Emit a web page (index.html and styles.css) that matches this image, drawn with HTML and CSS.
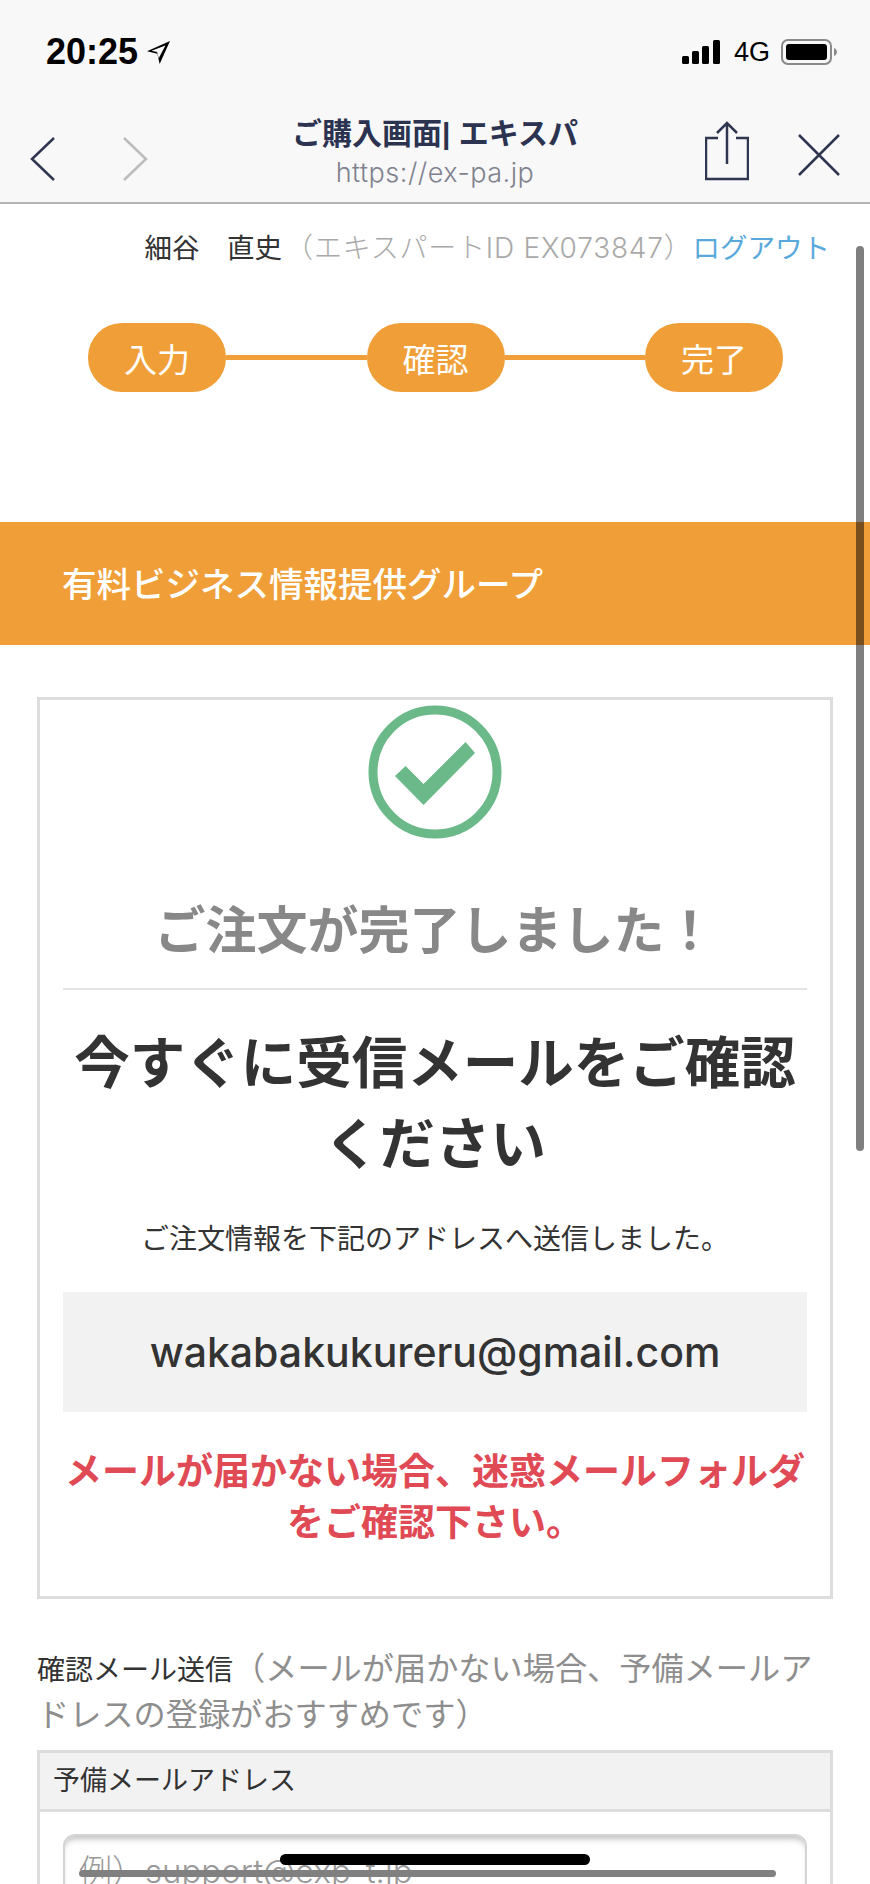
FILE: index.html
```html
<!DOCTYPE html>
<html lang="ja">
<head>
  <meta charset="UTF-8" />
  <meta name="viewport" content="width=device-width, initial-scale=1.0" />
  <title>ご購入画面| エキスパ</title>
  <link rel="stylesheet" href="styles.css">
</head>
<body>
  <div class="screen">
    <header class="browser-bar">
      <div class="status-bar">
        <div class="status-time">
          <span>20:25</span>
          <svg class="location-icon" viewBox="2 2 20 20" width="23" height="23">
            <path d="M22 2 L2 11 L11 13 L13 22 Z M18 6 L12.2 17 L10.8 11.500 L6 10.400 Z" fill="#000" fill-rule="evenodd"/>
          </svg>
        </div>
        <div class="status-right">
          <svg class="signal-icon" viewBox="0 0 38 24" width="38" height="24">
            <rect x="0" y="16" width="7" height="8" rx="1.5" fill="#000"/>
            <rect x="10" y="11" width="7" height="13" rx="1.5" fill="#000"/>
            <rect x="20" y="6" width="7" height="18" rx="1.5" fill="#000"/>
            <rect x="31" y="0" width="7" height="24" rx="1.5" fill="#000"/>
          </svg>
          <span class="network">4G</span>
          <svg viewBox="0 0 56 26" width="56" height="26">
            <rect x="1" y="1" width="49" height="24" rx="6" fill="none" stroke="#8a8a8a" stroke-width="2"/>
            <rect x="5" y="5" width="41" height="16" rx="3" fill="#000"/>
            <path d="M53 9 C55 10 56 11.500 56 13 C56 14.500 55 16 53 17 Z" fill="#8a8a8a"/>
          </svg>
        </div>
      </div>
      <nav class="nav-bar">
        <div class="nav-arrows">
          <svg viewBox="0 0 26 44" width="26" height="44">
            <path d="M24 1 L2 22 L24 43" fill="none" stroke="#2f3650" stroke-width="2.500"/>
          </svg>
          <svg viewBox="0 0 26 44" width="26" height="44">
            <path d="M2 1 L24 22 L2 43" fill="none" stroke="#bcbcbc" stroke-width="2.500"/>
          </svg>
        </div>
        <div class="nav-title">
          <div class="page-title">ご購入画面| エキスパ</div>
          <div class="page-url">https://ex-pa.jp</div>
        </div>
        <div class="nav-actions">
          <svg class="share-icon" viewBox="0 0 44 60" width="44" height="60">
            <path d="M13 17 H1 V58 H43 V17 H31 M22 43 V2 M12 12 L22 2 L32 12" fill="none" stroke="#2f3650" stroke-width="2.500"/>
          </svg>
          <svg viewBox="0 0 42 42" width="42" height="42">
            <path d="M1 1 L41 41 M41 1 L1 41" fill="none" stroke="#2f3650" stroke-width="2.500"/>
          </svg>
        </div>
      </nav>
    </header>

    <main>
      <div class="user-line">
        <span class="user-name">細谷　直史</span>
        <span class="user-id">（エキスパートID EX073847）</span>
        <a class="logout">ログアウト</a>
      </div>

      <div class="steps">
        <div class="step">入力</div>
        <div class="step-line"></div>
        <div class="step">確認</div>
        <div class="step-line"></div>
        <div class="step">完了</div>
      </div>

      <div class="group-banner">有料ビジネス情報提供グループ</div>

      <section class="done-card">
        <svg class="check-icon" viewBox="0 0 134 134" width="134" height="134">
          <circle cx="67" cy="67" r="62" fill="none" stroke="#6bb888" stroke-width="9"/>
          <path d="M27 71 L37.600 61 L55.500 79 L97.600 37 L107 48 L55.500 100 Z" fill="#6bb888"/>
        </svg>
        <h2 class="done-title">ご注文が完了しました！</h2>
        <h1 class="done-lead">今すぐに受信メールをご確認ください</h1>
        <p class="done-note">ご注文情報を下記のアドレスへ送信しました。</p>
        <div class="done-mail">wakabakukureru@gmail.com</div>
        <p class="done-warn">メールが届かない場合、迷惑メールフォルダをご確認下さい。</p>
      </section>

      <p class="resend-label">確認メール送信<span class="resend-hint">（メールが届かない場合、予備メールアドレスの登録がおすすめです）</span></p>

      <section class="mail-form">
        <div class="mail-form-head">予備メールアドレス</div>
        <div class="mail-form-body">
          <div class="mail-input">例）support@exp-t.jp</div>
        </div>
      </section>
    </main>

    <div class="scroll-v"></div>
    <div class="scroll-h"></div>
    <div class="home-bar"></div>
  </div>
</body>
</html>
```

FILE: styles.css
```css
* {
  box-sizing: border-box;
  margin: 0;
  padding: 0;
}

body {
  background: #fff;
  color: #333;
  font-family: "Liberation Sans", "Noto Sans CJK JP", sans-serif;
}

.screen {
  position: relative;
  width: 870px;
  height: 1884px;
  overflow: hidden;
}

.browser-bar {
  height: 204px;
  background: #f8f8f8;
  border-bottom: 2px solid #b4b4b4;
}

.status-bar {
  display: flex;
  justify-content: space-between;
  align-items: center;
  height: 104px;
  padding: 0 33px 0 46px;
  color: #000;
}

.status-time {
  display: flex;
  align-items: center;
  gap: 9px;
  font-size: 36px;
  font-weight: 700;
}

.status-right {
  display: flex;
  align-items: center;
  gap: 11px;
}

.signal-icon {
  margin-right: 3px;
}

.network {
  font-size: 27px;
}

.nav-bar {
  display: grid;
  grid-template-columns: 1fr auto 1fr;
  align-items: center;
  height: 98px;
  padding: 0 30px;
}

.nav-arrows {
  display: flex;
  align-items: center;
  gap: 66px;
  padding-top: 12px;
}

.nav-title {
  text-align: center;
}

.page-title {
  font-size: 30px;
  font-weight: 700;
  line-height: 38px;
  color: #2b3350;
}

.page-url {
  font-family: Inter, "Noto Sans CJK JP", sans-serif;
  font-size: 27px;
  font-weight: 300;
  line-height: 39px;
  letter-spacing: 0.5px;
  color: #7f828e;
}

.nav-actions {
  display: flex;
  justify-content: flex-end;
  align-items: center;
  gap: 49px;
  padding-top: 4px;
}

.share-icon {
  margin-bottom: 8px;
}

.user-line {
  display: flex;
  justify-content: flex-end;
  align-items: center;
  height: 84px;
  padding: 0 40px 0 0;
  font-size: 27.5px;
}

.user-name {
  margin-right: 3px;
}

.user-id {
  font-family: Inter, "Noto Sans CJK JP", sans-serif;
  font-size: 28px;
  font-weight: 300;
  letter-spacing: 0.8px;
  color: #a9a9a9;
}

.logout {
  color: #5aa9dc;
}

.steps {
  display: flex;
  align-items: center;
  margin: 35px 87px 0 88px;
}

.step {
  display: flex;
  align-items: center;
  justify-content: center;
  width: 138px;
  height: 69px;
  border-radius: 34px;
  background: #f09f38;
  color: #fff;
  font-size: 33px;
}

.step-line {
  flex: 1;
  height: 5px;
  background: #f09f38;
}

.group-banner {
  display: flex;
  align-items: center;
  height: 123px;
  margin-top: 130px;
  padding: 0 0 4px 62px;
  background: #f09f38;
  color: #fff;
  font-size: 34.500px;
  font-weight: 500;
}

.done-card {
  display: flex;
  flex-direction: column;
  align-items: center;
  height: 902px;
  margin: 52px 37px 0;
  padding: 5px 23px 0;
  border: 3px solid #ddd;
  text-align: center;
}

.check-icon {
  flex: none;
}

.done-title {
  align-self: stretch;
  height: 151px;
  padding-top: 55px;
  border-bottom: 2px solid #e4e4e4;
  color: #888;
  font-size: 51px;
  font-weight: 700;
  line-height: 76px;
}

.done-lead {
  margin-top: 34px;
  width: 100%;
  color: #333;
  font-size: 55.500px;
  font-weight: 700;
  line-height: 81px;
}

.done-note {
  margin-top: 34px;
  font-size: 28px;
  line-height: 40px;
}

.done-mail {
  align-self: stretch;
  height: 120px;
  margin-top: 32px;
  background: #f2f2f2;
  font-family: Inter, "Noto Sans CJK JP", sans-serif;
  font-size: 41px;
  font-weight: 500;
  line-height: 120px;
}

.done-warn {
  margin-top: 35px;
  color: #e04a55;
  font-size: 37px;
  font-weight: 700;
  line-height: 51px;
}

.resend-label {
  margin: 48px 37px 0;
  font-size: 28px;
  line-height: 44px;
}

.resend-hint {
  color: #8e8e8e;
  font-size: 32.200px;
}

.mail-form {
  margin: 11px 37px 0;
  border: 3px solid #ddd;
}

.mail-form-head {
  height: 59px;
  padding-left: 13px;
  border-bottom: 3px solid #ddd;
  background: #f2f2f2;
  font-size: 27px;
  line-height: 56px;
}

.mail-form-body {
  padding: 22px 23px;
}

.mail-input {
  height: 90px;
  padding: 12px 14px 0;
  border: 2px solid #d4d4d4;
  border-radius: 12px;
  box-shadow: inset 0 6px 6px -3px #c0c0c0;
  color: #999;
  font-family: Inter, "Noto Sans CJK JP", sans-serif;
  font-size: 33px;
  font-weight: 300;
  line-height: 46px;
}

/* overlays from the phone itself */
.scroll-v {
  position: absolute;
  top: 246px;
  right: 6px;
  width: 8px;
  height: 905px;
  border-radius: 4px;
  background: rgba(0, 0, 0, 0.5);
}

.scroll-h {
  position: absolute;
  left: 79px;
  bottom: 7px;
  width: 697px;
  height: 7px;
  border-radius: 4px;
  background: #808080;
}

.home-bar {
  position: absolute;
  left: 280px;
  bottom: 19px;
  width: 310px;
  height: 11px;
  border-radius: 6px;
  background: #000;
}
```
